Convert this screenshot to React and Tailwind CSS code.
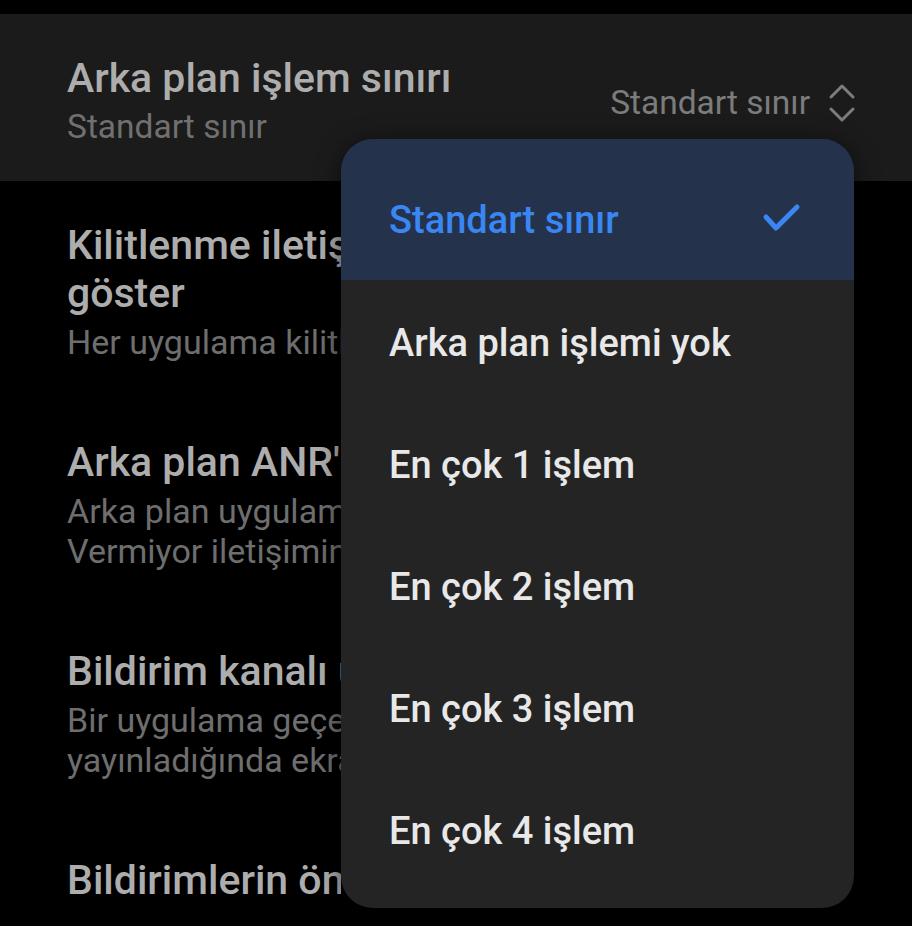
import React from 'react';

const options = [
  'Standart sınır',
  'Arka plan işlemi yok',
  'En çok 1 işlem',
  'En çok 2 işlem',
  'En çok 3 işlem',
  'En çok 4 işlem',
];

const items = [
  {
    title: ['Kilitlenme iletişimlerini her zaman', 'göster'],
    sub: ['Her uygulama kilitlendiğinde iletişim kutusu göster'],
  },
  {
    title: ["Arka plan ANR'lerini göster"],
    sub: ['Arka plan uygulamaları için Uygulama Yanıt', 'Vermiyor iletişimini göster'],
  },
  {
    title: ['Bildirim kanalı uyarılarını göster'],
    sub: ['Bir uygulama geçerli bir kanal olmadan bildirim', 'yayınladığında ekranda uyarı gösterir'],
  },
  {
    title: ['Bildirimlerin önemini ayarla'],
    sub: [],
  },
];

function UpDown() {
  return (
    <svg width="28" height="40" viewBox="0 0 28 40" fill="none" stroke="#7c7c7c" strokeWidth="3" strokeLinecap="round" strokeLinejoin="round">
      <path d="M3 14 L14 3 L25 14" />
      <path d="M3 26 L14 37 L25 26" />
    </svg>
  );
}

function Check() {
  return (
    <svg width="40" height="32" viewBox="0 0 40 32" fill="none" stroke="#3a86f2" strokeWidth="5" strokeLinecap="round" strokeLinejoin="round">
      <path d="M4 14 L14 25 L35 4" />
    </svg>
  );
}

export default function App() {
  return (
    <div
      className="relative w-[912px] h-[926px] overflow-hidden bg-black"
      style={{ fontFamily: 'Roboto, "Noto Sans", sans-serif' }}
    >
      <div className="h-[14px]" />

      {/* dimmed header row */}
      <div className="flex items-center justify-between bg-[#1b1b1b] pl-[67px] pr-[56px] pt-[40px] pb-[34px]">
        <div>
          <div className="text-[41px] leading-[48px] font-medium text-[#adadad] whitespace-nowrap">
            Arka plan işlem sınırı
          </div>
          <div className="mt-[5px] text-[33.5px] leading-[40px] text-[#707070] whitespace-nowrap">
            Standart sınır
          </div>
        </div>
        <div className="flex items-center gap-[18px] mt-[4px]">
          <span className="text-[33.5px] leading-[40px] text-[#7c7c7c] whitespace-nowrap">Standart sınır</span>
          <UpDown />
        </div>
      </div>

      {/* list behind the menu, cut where the menu covers it */}
      <div className="w-[341px] overflow-hidden pl-[67px] pt-[2px]">
        {items.map((it, i) => (
          <div key={i} className="py-[38px]">
            {it.title.map((t) => (
              <div key={t} className="text-[41px] leading-[48px] font-medium text-[#adadad] whitespace-nowrap">
                {t}
              </div>
            ))}
            {it.sub.length > 0 && (
              <div className="mt-[5px]">
                {it.sub.map((s) => (
                  <div key={s} className="text-[34px] leading-[40px] text-[#6e6e6e] whitespace-nowrap">
                    {s}
                  </div>
                ))}
              </div>
            )}
          </div>
        ))}
      </div>

      {/* dropdown menu */}
      <div className="absolute left-[341px] top-[139px] w-[513px] rounded-[32px] overflow-hidden bg-[#242424] pb-[18px] shadow-[0_4px_24px_rgba(0,0,0,0.6)]">
        {options.map((o, i) =>
          i === 0 ? (
            <div key={o} className="flex items-center justify-between bg-[#24324b] pt-[18px] h-[141px] pl-[48px] pr-[52px]">
              <span className="mt-[4px] text-[38px] font-medium text-[#3a86f2] whitespace-nowrap">{o}</span>
              <Check />
            </div>
          ) : (
            <div key={o} className="flex items-center h-[122px] pl-[48px]">
              <span className="mt-[4px] text-[38px] font-medium text-[#e8e8e8] whitespace-nowrap">{o}</span>
            </div>
          )
        )}
      </div>
    </div>
  );
}
